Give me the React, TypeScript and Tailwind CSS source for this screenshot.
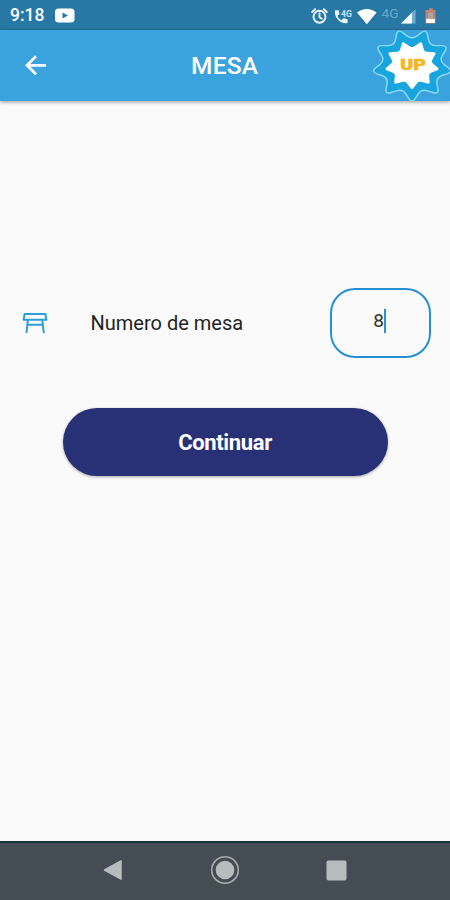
import { useState } from 'react';

// Star outline with softened tips, one tip pointing straight down.
function starPath(tips: number, outer: number, inner: number, soft: number) {
  const pts = Array.from({ length: tips * 2 }, (_, i) => {
    const r = i % 2 === 0 ? outer : inner;
    const a = Math.PI / 2 + (i * Math.PI) / tips;
    return [r * Math.cos(a), r * Math.sin(a)];
  });
  const mix = (a: number[], b: number[], t: number) =>
    `${(a[0] + (b[0] - a[0]) * t).toFixed(2)} ${(a[1] + (b[1] - a[1]) * t).toFixed(2)}`;
  return pts.map((p, i) => {
    const prev = pts[(i + pts.length - 1) % pts.length];
    const next = pts[(i + 1) % pts.length];
    return `${i ? 'L' : 'M'}${mix(p, prev, soft)} Q${p[0].toFixed(2)} ${p[1].toFixed(2)} ${mix(p, next, soft)}`;
  }).join(' ') + ' Z';
}

function StatusBar() {
  return (
    <div className="flex h-[30px] shrink-0 items-center justify-between bg-[#2878a5] pt-px pl-[10px] pr-[13px] text-white">
      <div className="flex items-center gap-[10px]">
        <span className="w-[35px] whitespace-nowrap pt-px text-[17.5px] font-medium leading-none">9:18</span>
        <svg width="20" height="15" viewBox="0 0 20 15">
          <rect x="0" y="0.5" width="19.5" height="14" rx="3.5" fill="#fff" />
          <path d="M7.5 4.5v6l5.5-3z" fill="#2878a5" />
        </svg>
      </div>
      <svg width="127" height="20" viewBox="0 0 127 20">
        <g fill="none" stroke="#edf8fc" strokeWidth="1.9" strokeLinecap="round">
          <circle cx="9.5" cy="10.8" r="6" />
          <path d="M9.5 7.5v3.7l2.3 1.5M2.2 6l3-2.8M16.8 6l-3-2.8" />
        </g>
        <path d="M25 4.2h3.6l.9 3.8-2.1 2c1 2 2.3 3.2 4.2 4.2l2-2 4 1v3.9c-7.4.9-13.7-5.4-12.6-12.9z" fill="#edf8fc" />
        <text x="31" y="10.5" fontSize="9.5" fontWeight="700" fill="#c9e2ee" textLength="11" lengthAdjust="spacingAndGlyphs">4G</text>
        <path d="M47 6.6c6-4.8 13.7-4.8 19.6 0L56.8 18.3z" fill="#fff" />
        <text x="71.5" y="11.5" fontSize="12" fill="#6ba7cb" textLength="17" lengthAdjust="spacingAndGlyphs">4G</text>
        <path d="M91 17.5L105.5 3v14.5z" fill="#70abd0" />
        <path d="M91 17.5L102 6.5v11z" fill="#f2fbff" />
        <path d="M119 2.2h4v1.8h2.5v13.6h-10v-13.6h3.5z" fill="#c5806f" />
        <path d="M118 6.5h5v5.5h-5z" fill="#a9a3aa" />
        <path d="M116.2 12.8h8.6v4.2h-8.6z" fill="#fff" />
      </svg>
    </div>
  );
}

function UpBadge() {
  return (
    <svg className="absolute top-[-2px] right-[-2px]" width="80" height="76" viewBox="-40 -37 80 76">
      <path d={starPath(9, 42, 27.5, 0.36)} transform="scale(1 0.92)" fill="#18a4dc" stroke="#8cdaf5" strokeWidth="1.5" />
      <path d={starPath(9, 28, 19.5, 0.2)} transform="scale(1 0.89)" fill="#fff" />
      <text x="1" y="5.3" textAnchor="middle" fontSize="15.5" fontWeight="900" fill="#f5b51d" stroke="#f5b51d" strokeWidth="0.6" textLength="25.5" lengthAdjust="spacingAndGlyphs">UP</text>
    </svg>
  );
}

function Header() {
  return (
    <header className="relative z-10 flex h-[71px] shrink-0 items-center justify-center bg-[#3aa3dd] text-white shadow-[0_1px_4px_rgba(0,0,0,0.4)]">
      <button className="absolute left-[25px] top-[25px]" aria-label="Atrás">
        <svg width="22" height="20" viewBox="0 0 22 20" fill="none" stroke="#fff" strokeWidth="2.7">
          <path d="M21 10.3H2.5M11 1.3L2 10.3l9 9" />
        </svg>
      </button>
      <h1 className="pt-[2px] text-[24.5px] font-medium leading-none"><span className="inline-block w-[68px] whitespace-nowrap tracking-[0.2px]">MESA</span></h1>
      <UpBadge />
    </header>
  );
}

function TableIcon() {
  return (
    <svg width="26" height="22" viewBox="0 0 26 22" fill="none" stroke="#2b9fd9" strokeWidth="2" strokeLinejoin="round">
      <path d="M2.6 1.9h20.8l1 5.9H1.6zM5.9 8L4.5 21M20.3 8l1.5 13M5.3 12.8h15.6" />
    </svg>
  );
}

function NavBar() {
  return (
    <nav className="flex h-[59px] shrink-0 items-center justify-between border-t-2 border-[#17363a] bg-[#454d54] pb-[3px] pl-[102px] pr-[103px]">
      <svg width="21" height="22" viewBox="0 0 21 22">
        <path d="M2.5 11L19 1.8v18.4z" fill="#b5bdbd" stroke="#b5bdbd" strokeWidth="1.5" strokeLinejoin="round" />
      </svg>
      <svg width="30" height="30" viewBox="0 0 30 30">
        <circle cx="15" cy="15" r="13.3" fill="none" stroke="#a5adad" strokeWidth="1.6" />
        <circle cx="15" cy="15" r="9.3" fill="#b5bdbd" />
      </svg>
      <svg width="21" height="21" viewBox="0 0 21 21">
        <rect x="0.5" y="0.5" width="20" height="20" rx="2" fill="#b5bdbd" />
      </svg>
    </nav>
  );
}

export default function App() {
  const [mesa] = useState('8');

  return (
    <div className="flex h-screen w-full flex-col overflow-hidden bg-[#fafafa] font-['Roboto',sans-serif]">
      <StatusBar />
      <Header />
      <main className="flex flex-1 flex-col pt-[187px]">
        <div className="flex h-[70px] items-center pl-[22px] pr-[19px]">
          <TableIcon />
          <span className="ml-[42.5px] flex-1 text-[20px] leading-none text-[#242424]">Numero de mesa</span>
          <div className="flex h-[70px] w-[101px] items-center justify-center rounded-[25px] border-[2.5px] border-[#258fd2] pb-[5px] pr-[2px]">
            <span className="text-[19px] leading-none text-[#333]">{mesa}</span>
            <span className="h-6 w-[2px] bg-[#2b91d3]" />
          </div>
        </div>
        <button className="mx-auto mt-[50px] h-[68px] w-[325px] rounded-full bg-[#283176] text-[22px] font-bold tracking-[-0.35px] text-white shadow-[0_1px_3px_rgba(0,0,0,0.35)]">
          Continuar
        </button>
      </main>
      <NavBar />
    </div>
  );
}
